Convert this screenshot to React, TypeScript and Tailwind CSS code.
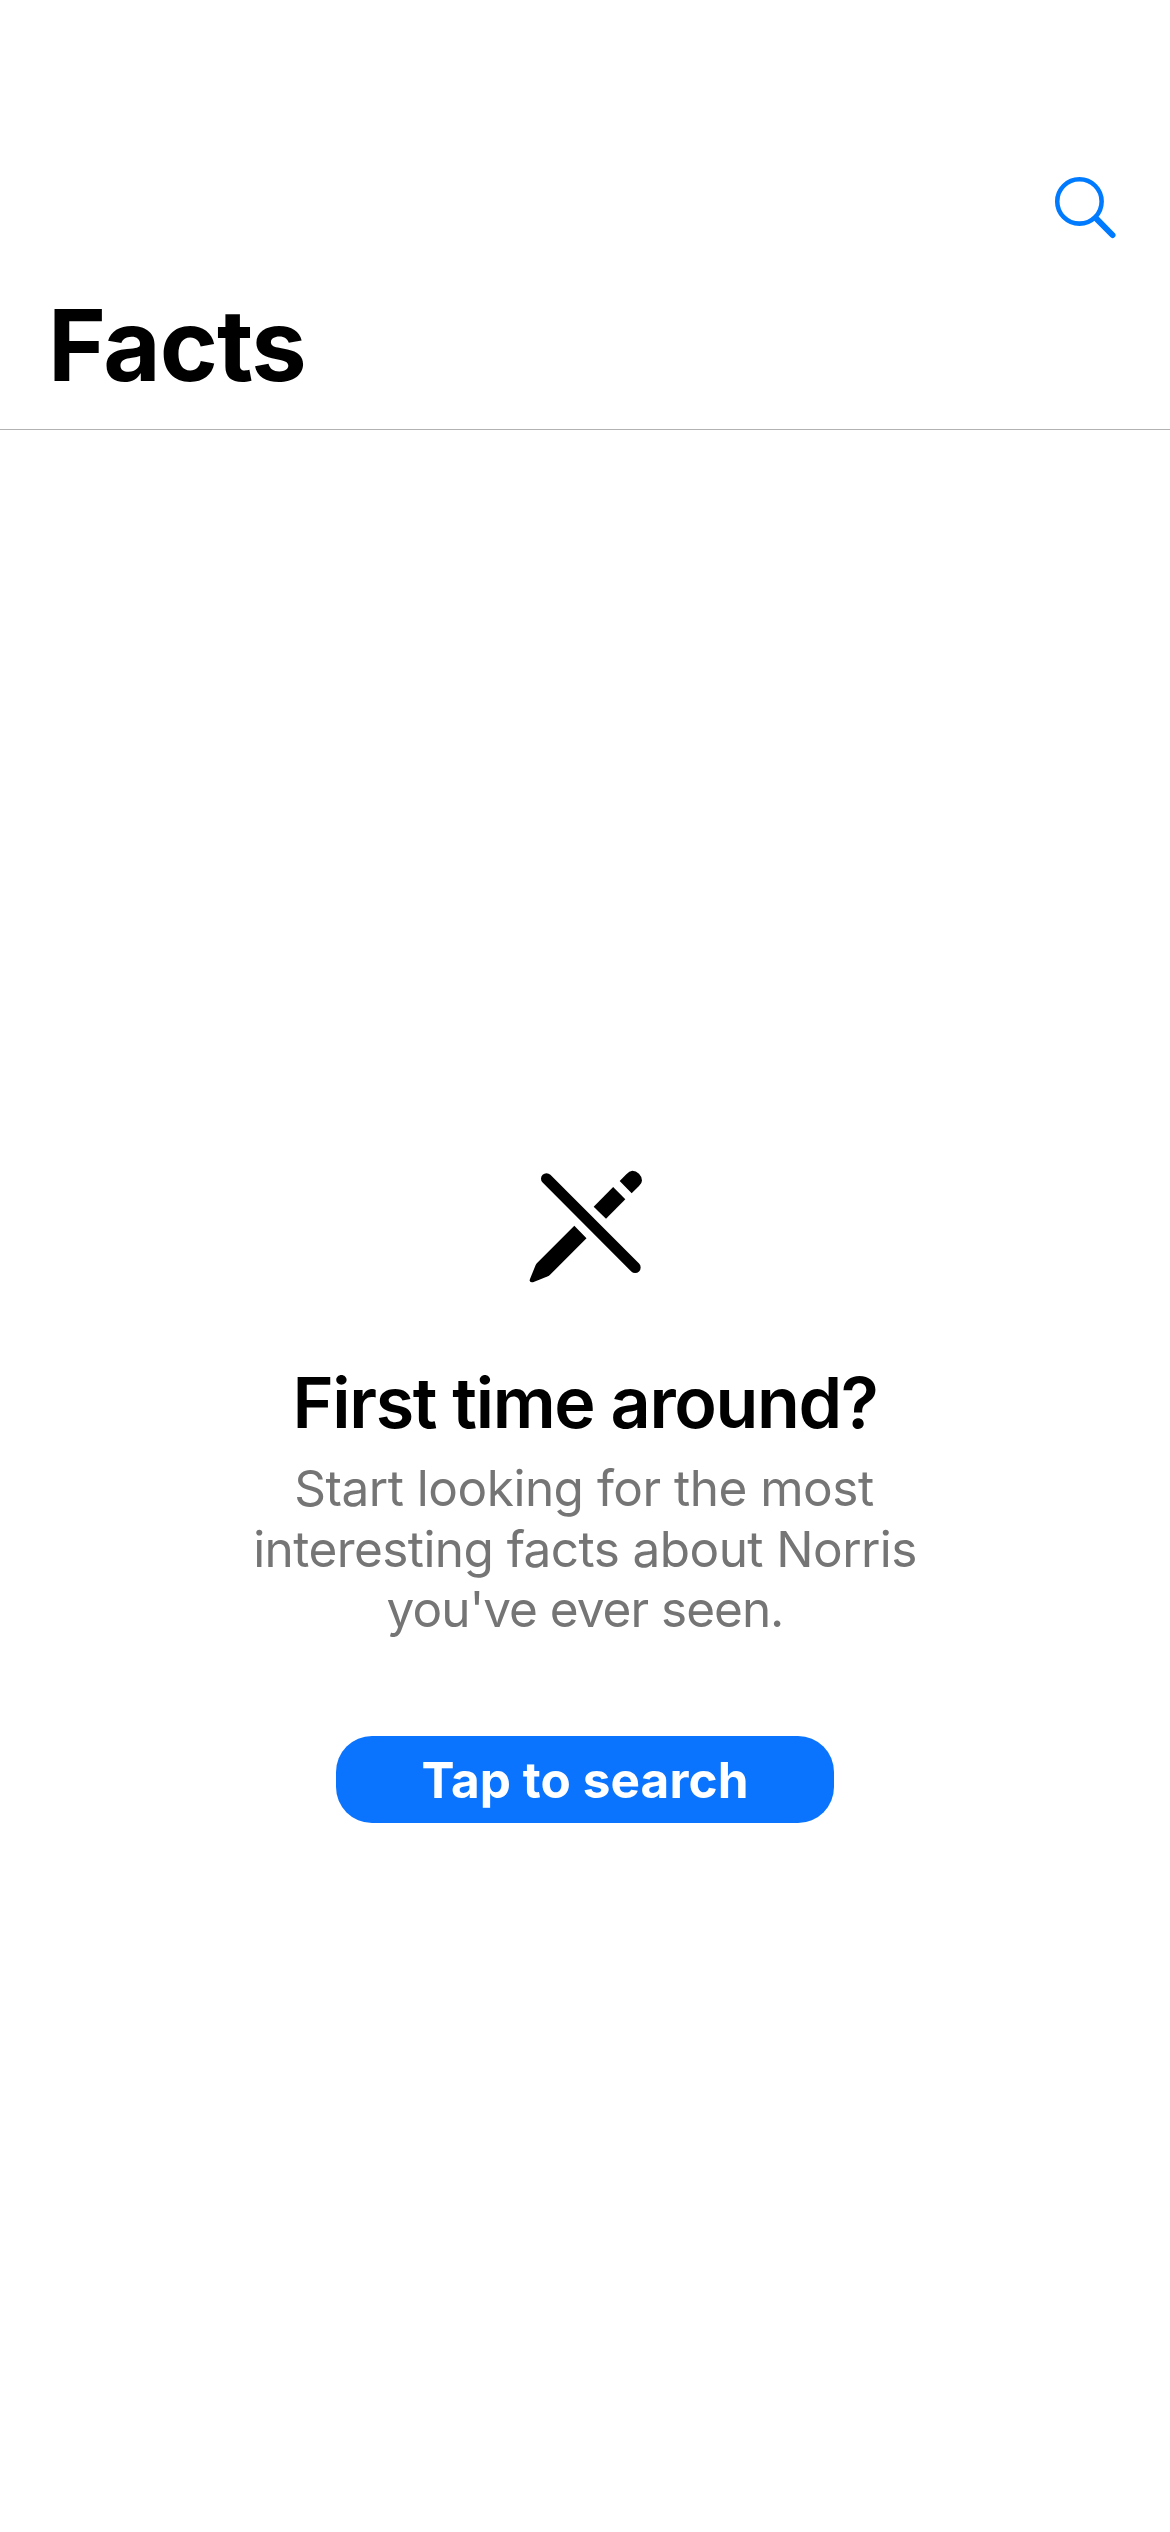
function SearchIcon() {
  return (
    <svg viewBox="0 0 300 300" className="size-[100px]" fill="none" stroke="#007aff" aria-hidden="true">
      <circle cx="118.3" cy="124.3" r="66.6" strokeWidth="13.6" />
      <path d="M169 176 217.5 225" strokeWidth="18" strokeLinecap="round" />
    </svg>
  );
}

function PencilSlashIcon() {
  return (
    <svg viewBox="0 0 450 450" className="size-[150px]" fill="#000" aria-hidden="true">
      <path d="M109.5 86 375.5 352.5" stroke="#000" strokeWidth="33" strokeLinecap="round" />
      <path d="M329 93 349 73Q358 62.5 367 62.5Q378 62.5 387 71Q396 80 396 91.500Q396 99.500 387 108L365 129.500Z" />
      <path d="M309.500 111 346 148 288 206.500 251 170Z" />
      <path d="M193 227.500 229.500 265 121 373.500Q117 377.500 112 379.500L69 396.500Q56 399 60 387L77 345Q79 341 82 338Z" />
    </svg>
  );
}

export default function App() {
  return (
    <div className="flex h-[2532px] w-[1170px] flex-col bg-white font-['Inter',sans-serif] text-black">
      <header className="flex h-[430px] flex-col border-b border-[#b2b2b2] pt-40">
        <button aria-label="Search" className="mr-[30px] self-end">
          <SearchIcon />
        </button>
        <h1 className="mt-[25px] pl-[48px] text-[99px] leading-[120px] font-bold tracking-[-1.1px]">Facts</h1>
      </header>
      <main className="flex flex-col items-center pt-[720px] text-center">
        <PencilSlashIcon />
        <h2 className="mt-[60px] text-[70px] leading-[85px] font-semibold tracking-[-1.37px] whitespace-nowrap">
          First time around?
        </h2>
        <p className="mt-[13px] text-[49.5px] leading-[60px] whitespace-nowrap text-[#757575]">
          <span className="block h-[61px] pr-[2px] tracking-[-0.5px]">Start looking for the most</span>
          <span className="block h-[60px] tracking-[-0.57px]">interesting facts about Norris</span>
          <span className="block h-[60px] tracking-[-1px]">you've ever seen.</span>
        </p>
        <button className="mt-[97px] h-[87px] w-[498px] rounded-[36px] bg-[#0a74ff] pt-[14px] pb-[13px] text-[49.5px] leading-[60px] font-bold tracking-[0.08px] whitespace-nowrap text-white">
          Tap to search
        </button>
      </main>
    </div>
  );
}
